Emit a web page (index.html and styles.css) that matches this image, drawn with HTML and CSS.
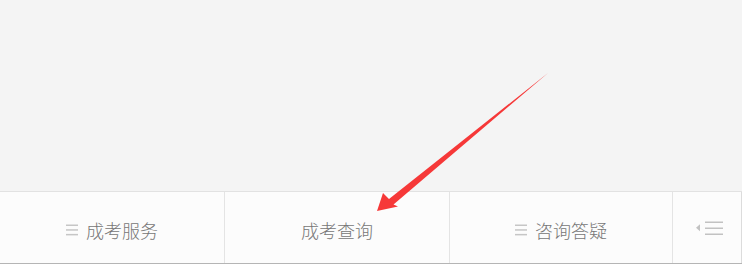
FILE: index.html
```html
<!DOCTYPE html>
<html lang="zh-CN">
<head>
<meta charset="utf-8">
<title>成考</title>
<link rel="stylesheet" href="styles.css">
</head>
<body>
<div class="page">
  <div class="content"></div>
  <nav class="tabbar">
    <div class="tab">
      <svg class="ico-menu" width="12" height="12" viewBox="0 0 12 12"><rect x="0" y="0.5" width="12" height="1.5"/><rect x="0" y="5.2" width="12" height="1.5"/><rect x="0" y="9.9" width="12" height="1.5"/></svg>
      <span class="label">成考服务</span>
    </div>
    <div class="tab">
      <span class="label">成考查询</span>
    </div>
    <div class="tab">
      <svg class="ico-menu" width="12" height="12" viewBox="0 0 12 12"><rect x="0" y="0.5" width="12" height="1.5"/><rect x="0" y="5.2" width="12" height="1.5"/><rect x="0" y="9.9" width="12" height="1.5"/></svg>
      <span class="label">咨询答疑</span>
    </div>
    <div class="tab tab-more">
      <svg class="ico-more" width="28" height="15" viewBox="0 0 28 15"><polygon points="0,6.8 4,3.3 4,10.3"/><rect x="9" y="0.5" width="18" height="1.5"/><rect x="9" y="6.5" width="18" height="1.5"/><rect x="9" y="12.5" width="18" height="1.5"/></svg>
    </div>
  </nav>
  <svg class="arrow" width="742" height="264" viewBox="0 0 742 264">
    <polygon points="377,211 383,193 389,199 548,73 393.5,204.5 398,206.5" fill="#f63838"/>
  </svg>
</div>
</body>
</html>
```
FILE: styles.css
```css
html, body {
  margin: 0;
  padding: 0;
  background: #f4f4f4;
}
.page {
  position: relative;
  width: 742px;
  height: 264px;
  display: flex;
  flex-direction: column;
  font-family: "Noto Sans CJK SC", "Noto Sans", sans-serif;
}
.content {
  height: 191px;
  background: #f4f4f4;
}
.tabbar {
  display: grid;
  grid-template-columns: 225px 225px 223px 69px;
  height: 73px;
  box-sizing: border-box;
  background: #fcfcfc;
  border-top: 1px solid #e2e2e2;
  border-bottom: 1px solid #b5b5b5;
}
.tab {
  display: flex;
  align-items: center;
  justify-content: center;
  gap: 8px;
  border-right: 1px solid #e4e4e4;
  padding-top: 4px;
  box-sizing: border-box;
}
.tab-more {
  border-right: 1px solid #dcdcdc;
  padding-left: 5px;
  padding-top: 2px;
}
.label {
  font-size: 18px;
  line-height: 20px;
  font-weight: 300;
  color: #777777;
}
.ico-menu {
  fill: #c6c6c6;
  margin-top: 1px;
}
.ico-more {
  fill: #c2c2c2;
}
.arrow {
  position: absolute;
  left: 0;
  top: 0;
  pointer-events: none;
}
```
